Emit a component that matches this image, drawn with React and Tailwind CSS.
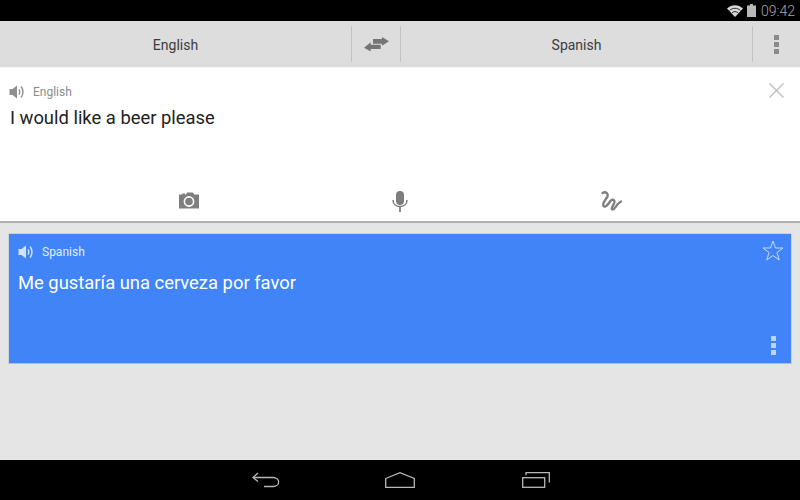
import React from 'react';

const Speaker = ({ className }) => (
  <svg className={className} width="16" height="14" viewBox="0 0 16 14" fill="none">
    <path d="M0.5 4H3.5L8 0.5V13.5L3.5 10H0.5Z" fill="currentColor" />
    <path d="M10 4.5C11 5.5 11 8.5 10 9.5" stroke="currentColor" strokeWidth="1.4" />
    <path d="M12 1.5C14.6 4.5 14.6 9.5 12 12.5" stroke="currentColor" strokeWidth="1.4" />
  </svg>
);

const Dots = ({ className }) => (
  <div className={`flex flex-col gap-[2px] ${className}`}>
    <div className="w-[5px] h-[5px] bg-current" />
    <div className="w-[5px] h-[5px] bg-current" />
    <div className="w-[5px] h-[5px] bg-current" />
  </div>
);

const StatusBar = () => (
  <div className="h-[21px] bg-black flex items-center justify-end pr-[5px] text-[#a8a8a8]">
    <svg width="16" height="12" viewBox="0 0 16 12" className="mr-[4px]">
      <path d="M0 3.6C4.5 -0.9 11.5 -0.9 16 3.6L8 12Z" fill="#d8d8d8" />
      <path d="M2.6 5.4C5.6 2.6 10.4 2.6 13.4 5.4" stroke="#000" strokeWidth="0.8" fill="none" />
      <path d="M5 7.8C6.8 6.2 9.2 6.2 11 7.8" stroke="#000" strokeWidth="0.8" fill="none" />
    </svg>
    <svg width="9" height="13" viewBox="0 0 9 13" className="mr-[5px]">
      <path d="M3 0H6V1.5H9V13H0V1.5H3Z" fill="#b8b8b8" />
    </svg>
    <span className="text-[14px] leading-none font-light">09:42</span>
  </div>
);

const Toolbar = () => (
  <div className="h-[47px] bg-[#dddddd] border-b border-[#f2f2f2] flex items-center text-[14px] text-[#3c3c3c]">
    <div className="w-[351px] text-center pt-[2px]">English</div>
    <div className="w-[50px] h-[36px] border-x border-[#c2c2c2] flex items-center justify-center">
      <svg width="25" height="15" viewBox="0 0 25 15" fill="#757575">
        <path d="M9 2H18V0L25 4.3L18 8.7V6.7H9Z" />
        <path d="M16.7 7.7H6.7V5.3L0 10.8L6.7 14.5V12H16.7Z" />
      </svg>
    </div>
    <div className="w-[351px] text-center pt-[2px]">Spanish</div>
    <div className="h-[36px] border-l border-[#c2c2c2] flex-1 flex items-center justify-center">
      <Dots className="text-[#8a8a8a]" />
    </div>
  </div>
);

const InputPanel = () => (
  <div className="h-[155px] bg-white border-b-2 border-[#b0b0b0] flex flex-col relative">
    <div className="flex items-center pl-[9px] pt-[17px] text-[#8c8c8c]">
      <Speaker className="text-[#8f8f8f]" />
      <span className="ml-[8px] text-[12px] leading-[14px]">English</span>
    </div>
    <div className="pl-[10px] mt-[7px] text-[18.4px] leading-[24px] text-[#222222]">I would like a beer please</div>
    <svg className="absolute top-[15px] right-[16px]" width="15" height="15" viewBox="0 0 15 15" stroke="#bdbdbd" strokeWidth="1.3">
      <path d="M0.5 0.5L14.5 14.5M14.5 0.5L0.5 14.5" />
    </svg>
    <div className="mt-auto h-[40px] flex items-center justify-center gap-[192px]">
      <svg width="22" height="17" viewBox="0 0 22 17" className="mt-[-1px]">
        <path d="M1 2.5H4L4.5 1.5H7V2.5H8L9 0.5H15L16 2.5H21V16.5H1Z" fill="#7e7e7e" />
        <circle cx="11" cy="9.5" r="4.6" fill="none" stroke="#fff" strokeWidth="1.6" />
      </svg>
      <svg width="16" height="21" viewBox="0 0 16 21" fill="none">
        <rect x="4" y="0" width="8" height="14" rx="4" fill="#7e7e7e" />
        <path d="M1 9C1 13 4 15.5 8 15.5C12 15.5 15 13 15 9" stroke="#7e7e7e" strokeWidth="1.5" />
        <path d="M8 15.5V21" stroke="#7e7e7e" strokeWidth="1.8" />
      </svg>
      <svg width="22" height="20" viewBox="0 0 22 20" fill="none">
        <path d="M2.5 2C6 0 9 3 7 6.5C5 9.5 2 12 3.5 15C5.5 17.5 9 12 10.5 10C12.5 7.5 15.5 9 14 12.5C13 15 10.5 18 12.5 18.5C15 19 16 13 21 10.5" stroke="#7e7e7e" strokeWidth="2.3" strokeLinecap="round" />
      </svg>
    </div>
  </div>
);

const ResultCard = () => (
  <div className="h-[131px] mx-[8px] mt-[10px] bg-[#4084f8] border border-t-[#d0d0d0] border-x-[#cfd4dc] border-b-[#bcbcbc] relative text-white">
    <div className="flex items-center pl-[9px] pt-[10px]">
      <Speaker className="text-[#d4e3fc]" />
      <span className="ml-[8px] text-[12px] leading-[16px] text-[#e3edfd]">Spanish</span>
    </div>
    <div className="pl-[9px] mt-[11px] text-[18.4px] leading-[24px]">Me gustaría una cerveza por favor</div>
    <svg className="absolute top-[6px] right-[7px]" width="22" height="21" viewBox="0 0 22 21" fill="none" stroke="#c6dafb" strokeWidth="1">
      <path d="M11 1L13.5 8H21L15 12.5L17.2 20L11 15.5L4.8 20L7 12.5L1 8H8.5Z" />
    </svg>
    <Dots className="absolute right-[15px] bottom-[8px] text-[#bcd4fb]" />
  </div>
);

const NavBar = () => (
  <div className="h-[40px] bg-black mt-auto flex items-center justify-center gap-[107px] pl-[2px] text-[#b8b8b8]">
    <svg width="28" height="16" viewBox="0 0 28 16" fill="none" stroke="currentColor" strokeWidth="1.3" className="mr-[-2px]">
      <path d="M1 5.5H21C28.5 5.5 28.5 14.5 21 14.5H12" />
      <path d="M6 1L1 5.5L6 9.5" />
    </svg>
    <svg width="30" height="16" viewBox="0 0 30 16" fill="none" stroke="currentColor" strokeWidth="1.3">
      <path d="M0.7 6.5L15 0.7L29.3 6.5V15.3H0.7Z" />
    </svg>
    <svg width="28" height="16" viewBox="0 0 28 16" fill="none" stroke="currentColor" strokeWidth="1.3">
      <rect x="0.7" y="5.7" width="22" height="9.6" />
      <path d="M4 3.2V0.7H27.3V10.5" />
    </svg>
  </div>
);

export default function App() {
  return (
    <div className="w-[800px] h-[500px] bg-[#e5e5e5] flex flex-col overflow-hidden font-['Roboto',sans-serif]">
      <StatusBar />
      <Toolbar />
      <InputPanel />
      <ResultCard />
      <NavBar />
    </div>
  );
}
